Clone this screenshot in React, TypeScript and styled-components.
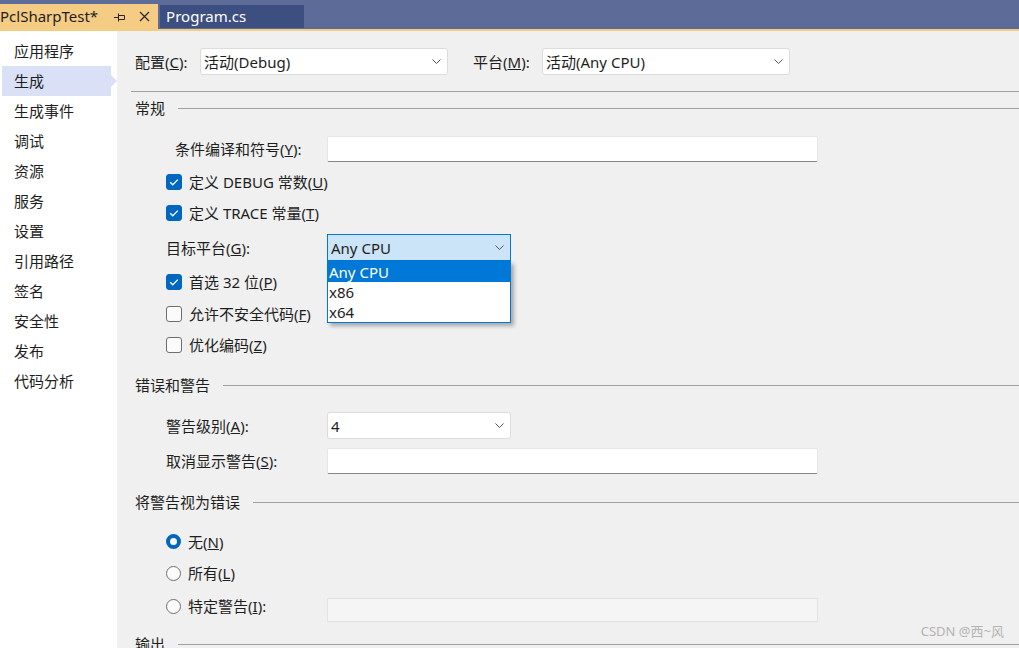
import styled, { createGlobalStyle } from "styled-components";

const GlobalStyle = createGlobalStyle`
  html, body {
    margin: 0;
    padding: 0;
    height: 100%;
    overflow: hidden;
  }
  body {
    font-family: "Noto Sans", "Noto Sans CJK SC", sans-serif;
    font-size: 15px;
    line-height: 20px;
    color: #1e1e1e;
    background: #f0f0f0;
  }
  #root {
    height: 100%;
  }
`;

const navItems = [
  "应用程序",
  "生成",
  "生成事件",
  "调试",
  "资源",
  "服务",
  "设置",
  "引用路径",
  "签名",
  "安全性",
  "发布",
  "代码分析",
];

const Chevron = () => (
  <svg width="9" height="5" viewBox="0 0 9 5">
    <polyline
      points="0.5,0.5 4.5,4.5 8.5,0.5"
      fill="none"
      stroke="#555"
      strokeWidth="1"
    />
  </svg>
);

const Check = () => (
  <svg width="16" height="16" viewBox="0 0 16 16">
    <polyline
      points="4.2,8.2 6.8,10.8 11.8,5.6"
      fill="none"
      stroke="#fff"
      strokeWidth="1.3"
    />
  </svg>
);

const PinIcon = () => (
  <svg width="12" height="10" viewBox="0 0 12 10">
    <path
      d="M0 5.5h4M4.5 1.5v8M4.5 3.5h6v4h-6"
      fill="none"
      stroke="#2b2417"
      strokeWidth="1"
    />
  </svg>
);

const CloseIcon = () => (
  <svg width="11" height="11" viewBox="0 0 11 11">
    <path
      d="M1 1l9 9M10 1l-9 9"
      fill="none"
      stroke="#2b2417"
      strokeWidth="1.2"
    />
  </svg>
);

const Mn = ({ c }: { c: string }) => (
  <>
    (<u>{c}</u>)
  </>
);

export default function App() {
  return (
    <Page>
      <GlobalStyle />
      <TabBar>
        <Tab $active>
          <TabTitle>PclSharpTest*</TabTitle>
          <TabIcons>
            <PinIcon />
            <CloseIcon />
          </TabIcons>
        </Tab>
        <Tab>
          <TabTitle>Program.cs</TabTitle>
        </Tab>
      </TabBar>
      <TabStrip />
      <Body>
        <Sidebar>
          {navItems.map((item) => (
            <NavItem key={item} $selected={item === "生成"}>
              {item}
            </NavItem>
          ))}
        </Sidebar>
        <Content>
          <ConfigRow>
            <FieldLabel $w={65}>
              配置<Mn c="C" />:
            </FieldLabel>
            <Select $w={248}>
              活动(Debug)
              <Chevron />
            </Select>
            <FieldLabel $w={69} $ml={25}>
              平台<Mn c="M" />:
            </FieldLabel>
            <Select $w={248}>
              活动(Any CPU)
              <Chevron />
            </Select>
          </ConfigRow>
          <Separator />

          <SectionHeader $mt={6}>常规</SectionHeader>
          <Row $h={26} $mt={18}>
            <FieldLabel $w={161} $pl={9}>
              条件编译和符号<Mn c="Y" />:
            </FieldLabel>
            <TextBox />
          </Row>
          <Row $h={31} $mt={4}>
            <CheckBox $checked>
              <Check />
            </CheckBox>
            <OptionText>
              定义 DEBUG 常数<Mn c="U" />
            </OptionText>
          </Row>
          <Row $h={32}>
            <CheckBox $checked>
              <Check />
            </CheckBox>
            <OptionText>
              定义 TRACE 常量<Mn c="T" />
            </OptionText>
          </Row>
          <Row $h={27} $mt={5}>
            <FieldLabel $w={161}>
              目标平台<Mn c="G" />:
            </FieldLabel>
            <SelectWrap>
              <Select $w={184} $open>
                Any CPU
                <Chevron />
              </Select>
              <DropList>
                <DropOption $selected>Any CPU</DropOption>
                <DropOption>x86</DropOption>
                <DropOption>x64</DropOption>
              </DropList>
            </SelectWrap>
          </Row>
          <Row $h={31} $mt={5}>
            <CheckBox $checked>
              <Check />
            </CheckBox>
            <OptionText>
              首选 32 位<Mn c="P" />
            </OptionText>
          </Row>
          <Row $h={33}>
            <CheckBox />
            <OptionText>
              允许不安全代码<Mn c="F" />
            </OptionText>
          </Row>
          <Row $h={30}>
            <CheckBox />
            <OptionText>
              优化编码<Mn c="Z" />
            </OptionText>
          </Row>

          <SectionHeader $mt={15}>错误和警告</SectionHeader>
          <Row $h={27} $mt={17}>
            <FieldLabel $w={161}>
              警告级别<Mn c="A" />:
            </FieldLabel>
            <Select $w={184}>
              4
              <Chevron />
            </Select>
          </Row>
          <Row $h={26} $mt={9}>
            <FieldLabel $w={161}>
              取消显示警告<Mn c="S" />:
            </FieldLabel>
            <TextBox />
          </Row>

          <SectionHeader $mt={18}>将警告视为错误</SectionHeader>
          <Row $h={31} $mt={14}>
            <Radio $checked />
            <OptionText>
              无<Mn c="N" />
            </OptionText>
          </Row>
          <Row $h={32}>
            <Radio />
            <OptionText>
              所有<Mn c="L" />
            </OptionText>
          </Row>
          <Row $h={34}>
            <RadioField>
              <Radio />
              <OptionText>
                特定警告<Mn c="I" />:
              </OptionText>
            </RadioField>
            <DisabledBox />
          </Row>

          <SectionHeader $mt={11}>输出</SectionHeader>
          <Watermark>CSDN @西~风</Watermark>
        </Content>
      </Body>
    </Page>
  );
}

const Page = styled.div`
  width: 100vw;
  height: 648px;
  display: flex;
  flex-direction: column;
  overflow: hidden;
`;

const TabBar = styled.div`
  height: 29px;
  flex-shrink: 0;
  display: flex;
  align-items: flex-end;
  background: #5d6b99;
`;

const Tab = styled.div<{ $active?: boolean }>`
  display: flex;
  align-items: center;
  box-sizing: border-box;
  height: ${(p) => (p.$active ? "25px" : "23px")};
  margin: ${(p) => (p.$active ? "0" : "0 0 1px 2px")};
  padding: ${(p) => (p.$active ? "0 8px 0 0" : "0 58px 0 6px")};
  background: ${(p) => (p.$active ? "#f5cc84" : "#3d4f80")};
  color: ${(p) => (p.$active ? "#1e1e1e" : "#ffffff")};
  font-family: "Noto Sans", sans-serif;
  font-size: 15px;
`;

const TabTitle = styled.span`
  white-space: nowrap;
  padding-bottom: 1px;
`;

const TabIcons = styled.span`
  display: flex;
  align-items: center;
  gap: 13px;
  margin-left: 16px;
`;

const TabStrip = styled.div`
  height: 2px;
  flex-shrink: 0;
  background: #f5cc84;
`;

const Body = styled.div`
  flex: 1;
  min-height: 0;
  display: flex;
`;

const Sidebar = styled.div`
  width: 117px;
  flex-shrink: 0;
  box-sizing: border-box;
  padding-top: 5px;
  background: #ffffff;
`;

const NavItem = styled.div<{ $selected?: boolean }>`
  position: relative;
  display: flex;
  align-items: center;
  box-sizing: border-box;
  height: 30px;
  width: 109px;
  margin-left: 2px;
  padding-left: 12px;
  background: ${(p) => (p.$selected ? "#dae1f7" : "transparent")};

  &::after {
    content: "";
    display: ${(p) => (p.$selected ? "block" : "none")};
    position: absolute;
    left: 100%;
    top: 50%;
    margin-top: -6px;
    border-left: 6px solid #dae1f7;
    border-top: 6px solid transparent;
    border-bottom: 6px solid transparent;
  }
`;

const Content = styled.div`
  position: relative;
  flex: 1;
  min-width: 0;
  display: flex;
  flex-direction: column;
  box-sizing: border-box;
  padding: 17px 0 0 18px;
  overflow: hidden;
`;

const ConfigRow = styled.div`
  display: flex;
  align-items: center;
  height: 27px;
  flex-shrink: 0;
`;

const FieldLabel = styled.div<{ $w: number; $ml?: number; $pl?: number }>`
  width: ${(p) => p.$w}px;
  flex-shrink: 0;
  box-sizing: border-box;
  margin-left: ${(p) => p.$ml ?? 0}px;
  padding-left: ${(p) => p.$pl ?? 0}px;
  white-space: nowrap;
`;

const Select = styled.div<{ $w: number; $open?: boolean }>`
  width: ${(p) => p.$w}px;
  height: 27px;
  flex-shrink: 0;
  box-sizing: border-box;
  display: flex;
  align-items: center;
  justify-content: space-between;
  padding: 0 6px 0 3px;
  background: ${(p) => (p.$open ? "#cce4f7" : "#ffffff")};
  border: 1px solid ${(p) => (p.$open ? "#0078d7" : "#dcdcdc")};
  border-radius: ${(p) => (p.$open ? "0" : "3px")};
  white-space: nowrap;

  svg {
    flex-shrink: 0;
  }
`;

const SelectWrap = styled.div`
  position: relative;
`;

const DropList = styled.div`
  position: absolute;
  top: 100%;
  left: 0;
  width: 184px;
  box-sizing: border-box;
  border: 1px solid #0078d7;
  background: #ffffff;
  box-shadow: 3px 3px 4px rgba(0, 0, 0, 0.3);
  z-index: 10;
`;

const DropOption = styled.div<{ $selected?: boolean }>`
  height: 20px;
  line-height: 20px;
  padding-left: 1px;
  background: ${(p) => (p.$selected ? "#0078d7" : "transparent")};
  color: ${(p) => (p.$selected ? "#ffffff" : "#1e1e1e")};
`;

const Separator = styled.div`
  height: 1px;
  flex-shrink: 0;
  margin: 16px 0 0 -4px;
  background: #a0a0a0;
`;

const SectionHeader = styled.div<{ $mt: number }>`
  display: flex;
  align-items: center;
  height: 20px;
  flex-shrink: 0;
  margin-top: ${(p) => p.$mt}px;
  white-space: nowrap;

  &::after {
    content: "";
    flex: 1;
    height: 1px;
    margin-left: 13px;
    background: #a0a0a0;
  }
`;

const Row = styled.div<{ $h: number; $mt?: number }>`
  display: flex;
  align-items: center;
  height: ${(p) => p.$h}px;
  flex-shrink: 0;
  margin-top: ${(p) => p.$mt ?? 0}px;
  padding-left: 31px;
`;

const TextBox = styled.div`
  width: 491px;
  height: 26px;
  flex-shrink: 0;
  box-sizing: border-box;
  background: #ffffff;
  border: 1px solid #e6e6e6;
  border-bottom-color: #868686;
  border-radius: 2px;
`;

const DisabledBox = styled.div`
  width: 491px;
  height: 24px;
  flex-shrink: 0;
  align-self: flex-start;
  margin-top: 9px;
  box-sizing: border-box;
  background: #f5f5f5;
  border: 1px solid #e2e2e2;
`;

const CheckBox = styled.span<{ $checked?: boolean }>`
  width: 16px;
  height: 16px;
  flex-shrink: 0;
  box-sizing: border-box;
  display: flex;
  border-radius: 3px;
  background: ${(p) => (p.$checked ? "#0067c0" : "#fbfbfb")};
  border: 1px solid ${(p) => (p.$checked ? "#0067c0" : "#6e6e6e")};

  svg {
    margin: -1px;
  }
`;

const Radio = styled.span<{ $checked?: boolean }>`
  width: 15px;
  height: 15px;
  flex-shrink: 0;
  box-sizing: border-box;
  border-radius: 50%;
  background: #fbfbfb;
  border: ${(p) => (p.$checked ? "4.5px solid #0067c0" : "1px solid #6e6e6e")};
`;

const RadioField = styled.div`
  width: 161px;
  flex-shrink: 0;
  display: flex;
  align-items: center;
`;

const OptionText = styled.span`
  margin-left: 7px;
  white-space: nowrap;
`;

const Watermark = styled.div`
  position: absolute;
  right: 15px;
  bottom: 7px;
  font-size: 13px;
  color: #b3b3b3;
  white-space: nowrap;
`;
